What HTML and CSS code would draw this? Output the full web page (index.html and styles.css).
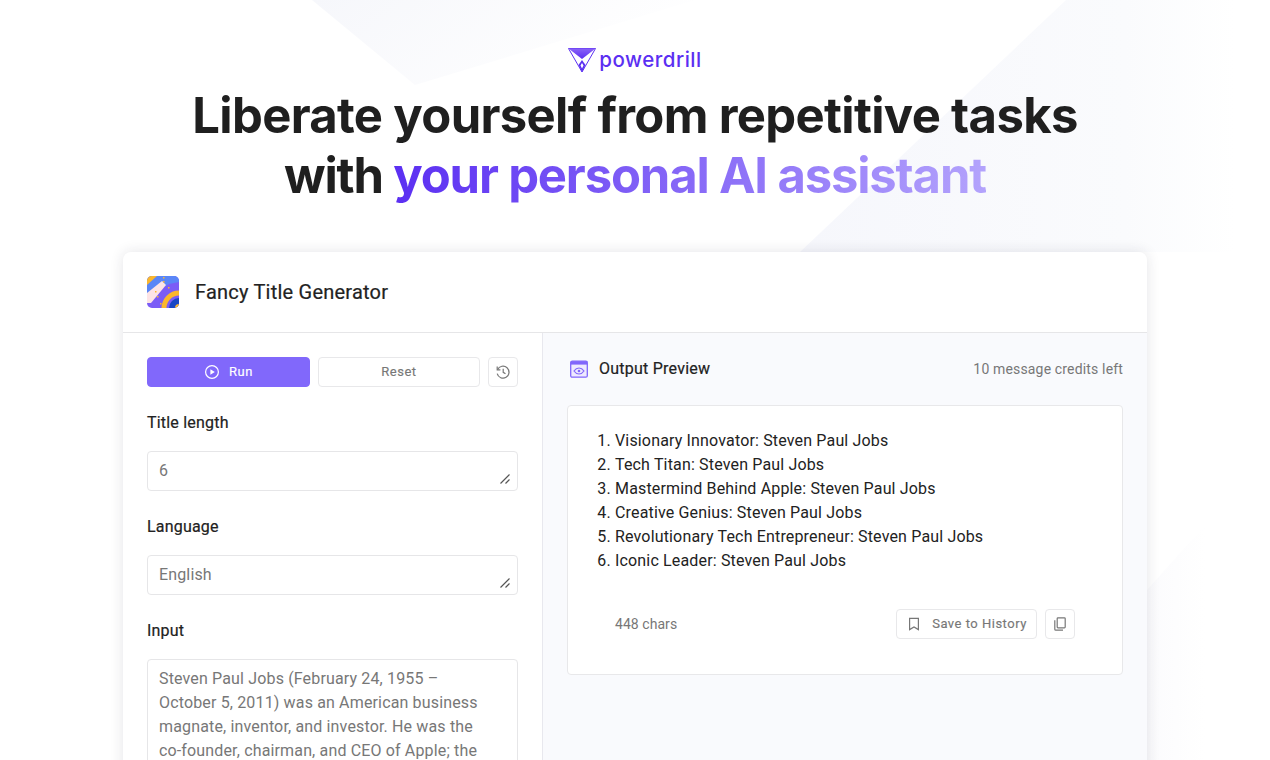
FILE: index.html
```html
<!DOCTYPE html>
<html lang="en">
<head>
<meta charset="utf-8">
<title>Powerdrill</title>
<link rel="stylesheet" href="styles.css">
</head>
<body>
<svg class="backdrop" width="1270" height="760" viewBox="0 0 1270 760" aria-hidden="true">
  <defs>
    <linearGradient id="bgA" x1="0" y1="0" x2="1" y2="0.3"><stop offset="0" stop-color="#f6f7fb"/><stop offset="1" stop-color="#fff"/></linearGradient>
    <linearGradient id="bgB" x1="0" y1="0.5" x2="1" y2="0.5"><stop offset="0" stop-color="#f6f7fc"/><stop offset="0.75" stop-color="#fafbfd"/><stop offset="1" stop-color="#fff"/></linearGradient>
    <linearGradient id="bgC" x1="0" y1="0" x2="1" y2="0"><stop offset="0" stop-color="#fbfbfd"/><stop offset="1" stop-color="#fff"/></linearGradient>
  </defs>
  <polygon points="312,0 695,0 415,85" fill="url(#bgA)"/>
  <polygon points="1066,0 1235,0 1235,252 800,252" fill="url(#bgB)"/>
  <polygon points="1147,590 1205,525 1205,760 1147,760" fill="url(#bgC)"/>
</svg>
<main class="page">
  <header class="hero">
    <div class="brand">
      <svg class="brand-mark" width="28" height="25" viewBox="0 0 28 25" aria-hidden="true">
        <defs><linearGradient id="markTop" x1="0" y1="0" x2="0" y2="1"><stop offset="0" stop-color="#8a63f7"/><stop offset="1" stop-color="#5b2ff2"/></linearGradient></defs>
        <polygon points="0.500,0.500 27.500,0.500 14,24" fill="none" stroke="#5b2ff2" stroke-width="1"/>
        <polygon points="0.500,0.500 27.500,0.500 14,11" fill="url(#markTop)"/>
        <polygon points="14,12 17.500,17 14,24 10.500,17" fill="#5b2ff2"/>
        <polygon points="14,15 15.500,17.500 14,20.500 12.500,17.500" fill="#fff"/>
      </svg>
      <span class="brand-name">powerdrill</span>
    </div>
    <h1 class="headline"><span class="line-one">Liberate yourself from repetitive tasks</span><br><span class="line-two">with <span class="accent">your personal AI assistant</span></span></h1>
  </header>

  <section class="card">
    <div class="card-head">
      <svg class="app-icon" width="32" height="32" viewBox="0 0 32 32" aria-hidden="true">
        <defs><clipPath id="appClip"><rect width="32" height="32" rx="5"/></clipPath></defs>
        <g clip-path="url(#appClip)">
          <rect width="32" height="32" fill="#7b5cf6"/>
          <polygon points="0,0 32,0 32,6 22,8 0,22" fill="#5a86f7"/>
          <polygon points="0,0 10,0 0,9" fill="#fbb72c"/>
          <polygon points="0,17 15,5 19,9 4,27 0,27" fill="#fde4e6"/>
          <circle cx="32" cy="32" r="15" fill="none" stroke="#fbb72c" stroke-width="5"/>
          <circle cx="32" cy="32" r="10" fill="#1746c4"/>
          <circle cx="32" cy="32" r="4" fill="#fbb72c"/>
          <rect x="16" y="1" width="1.500" height="1.500" fill="#fbb72c"/><rect x="16" y="5" width="1.500" height="1.500" fill="#fbb72c"/>
          <rect x="13" y="27" width="1.500" height="1.500" fill="#fbb72c"/><rect x="10" y="20" width="1.500" height="1.500" fill="#fbb72c"/>
          <rect x="21" y="11" width="1.500" height="1.500" fill="#fbb72c"/><rect x="8" y="15" width="1.500" height="1.500" fill="#fbb72c"/>
        </g>
      </svg>
      <h2 class="app-title">Fancy Title Generator</h2>
    </div>
    <div class="card-body">
      <div class="form-pane">
        <div class="actions">
          <button class="btn btn-run" type="button">
            <svg width="16" height="16" viewBox="0 0 16 16" aria-hidden="true"><circle cx="8" cy="8" r="6.400" fill="none" stroke="#fff" stroke-width="1.200"/><polygon points="6.400,5.300 10.800,8 6.400,10.700" fill="#fff"/></svg>
            <span class="btn-text">Run</span>
          </button>
          <button class="btn btn-reset" type="button"><span class="btn-text">Reset</span></button>
          <button class="btn btn-icon" type="button" aria-label="History">
            <svg width="16" height="16" viewBox="0 0 16 16" fill="none" stroke="#777" stroke-width="1.200" aria-hidden="true"><path d="M2.600 5.600A6 6 0 1 1 2.200 9.600"/><path d="M2.200 2.600v3.200h3.200"/><path d="M8.200 4.800v3.500l2.300 1.500"/></svg>
          </button>
        </div>
        <label class="field-label">Title length</label>
        <div class="input">6<svg class="grip" width="10" height="10" viewBox="0 0 10 10" aria-hidden="true"><path d="M0.500 9.500 9.500 0.500M5.500 9.500 9.500 5.500" stroke="#555" stroke-width="1.200" fill="none"/></svg></div>
        <label class="field-label">Language</label>
        <div class="input">English<svg class="grip" width="10" height="10" viewBox="0 0 10 10" aria-hidden="true"><path d="M0.500 9.500 9.500 0.500M5.500 9.500 9.500 5.500" stroke="#555" stroke-width="1.200" fill="none"/></svg></div>
        <label class="field-label">Input</label>
        <div class="input input-long">Steven Paul Jobs (February 24, 1955 –<br>October 5, 2011) was an American business<br>magnate, inventor, and investor. He was the<br>co-founder, chairman, and CEO of Apple; the</div>
      </div>
      <div class="output-pane">
        <div class="output-head">
          <div class="output-title">
            <svg width="20" height="20" viewBox="0 0 20 20" aria-hidden="true"><rect x="1.700" y="2.200" width="16.600" height="16" rx="1.500" fill="#efeafe" stroke="#8166fb" stroke-width="1.300"/><rect x="1.700" y="2.200" width="16.600" height="3.400" fill="#8166fb"/><path d="M5 12c1.400-2 3-3 5-3s3.600 1 5 3c-1.400 2-3 3-5 3s-3.600-1-5-3z" fill="none" stroke="#8166fb" stroke-width="1.200"/><circle cx="10" cy="12" r="1.300" fill="#8166fb"/></svg>
            <h3 class="output-heading">Output Preview</h3>
          </div>
          <span class="credits">10 message credits left</span>
        </div>
        <div class="result">
          <ol class="titles">
            <li>Visionary Innovator: Steven Paul Jobs</li>
            <li>Tech Titan: Steven Paul Jobs</li>
            <li>Mastermind Behind Apple: Steven Paul Jobs</li>
            <li>Creative Genius: Steven Paul Jobs</li>
            <li>Revolutionary Tech Entrepreneur: Steven Paul Jobs</li>
            <li>Iconic Leader: Steven Paul Jobs</li>
          </ol>
          <div class="result-foot">
            <span class="chars">448 chars</span>
            <div class="foot-actions">
              <button class="btn btn-save" type="button">
                <svg width="16" height="16" viewBox="0 0 16 16" fill="none" stroke="#777" stroke-width="1.200" aria-hidden="true"><path d="M3.600 2.400h8.800v11.200L8 11l-4.400 2.600z"/></svg>
                <span class="btn-text">Save to History</span>
              </button>
              <button class="btn btn-icon" type="button" aria-label="Copy">
                <svg width="16" height="16" viewBox="0 0 16 16" fill="none" stroke="#777" stroke-width="1.200" aria-hidden="true"><rect x="5.200" y="1.800" width="8" height="10" rx="0.800"/><path d="M5.200 14.200H3.800a1 1 0 0 1-1-1V4.200M5 14.200h6"/></svg>
              </button>
            </div>
          </div>
        </div>
      </div>
    </div>
  </section>
</main>
</body>
</html>
```
FILE: styles.css
```css
* { box-sizing: border-box; }
html, body { height: 100%; }
body {
  margin: 0;
  height: 760px;
  overflow: hidden;
  position: relative;
  background: #fff;
  font-family: Roboto, "Liberation Sans", sans-serif;
  color: #1f1f1f;
}
.backdrop { position: absolute; left: 0; top: 0; }
.page { position: relative; display: flex; flex-direction: column; align-items: center; }
.hero { display: flex; flex-direction: column; align-items: center; padding-top: 46px; }
.brand { display: flex; align-items: center; gap: 3px; height: 27px; }
.brand-mark { margin-top: 2px; }
.brand-name {
  font-family: Inter, sans-serif;
  font-size: 20.500px;
  line-height: 26px;
  font-weight: 500;
  color: #5b2ff2;
  letter-spacing: 0.500px;
}
.headline {
  margin: 13px 0 0;
  font-family: Inter, sans-serif;
  font-size: 49px;
  line-height: 60px;
  font-weight: 700;
  text-align: center;
  color: #1f1f1f;
}
.line-one { letter-spacing: -0.670px; }
.line-two { letter-spacing: -1.170px; }
.accent {
  background: linear-gradient(90deg, #5b2ff2 0%, #b3a3fc 100%);
  -webkit-background-clip: text;
  background-clip: text;
  color: transparent;
}
.card {
  margin-top: 46px;
  width: 1024px;
  background: #fff;
  border-radius: 8px 8px 0 0;
  box-shadow: 0 0 14px rgba(30, 30, 60, 0.12);
}
.card-head {
  display: flex;
  align-items: center;
  gap: 16px;
  height: 81px;
  padding: 0 24px;
  border-bottom: 1px solid #e6e6e8;
}
.app-icon { display: block; }
.app-title { margin: 0; font-size: 20px; font-weight: 400; line-height: 28px; letter-spacing: 0.220px; color: #222; -webkit-text-stroke: 0.200px #222; }
.card-body { display: flex; height: 500px; }
.form-pane { width: 420px; padding: 24px 24px 0; border-right: 1px solid #e8e8ee; }
.actions { display: flex; gap: 8px; height: 30px; }
.btn {
  display: flex;
  align-items: center;
  justify-content: center;
  font-family: Roboto, sans-serif;
  font-size: 13px;
  font-weight: 400;
  letter-spacing: 0.500px;
  border-radius: 4px;
  border: 1px solid #e8e8ea;
  background: #fff;
  color: #777;
  padding: 0;
  -webkit-text-stroke: 0.150px currentColor;
}
.btn-text { position: relative; top: -1px; }
.btn-run { width: 163px; gap: 9px; background: #8168fb; border-color: #8168fb; color: #fff; }
.btn-reset { width: 162px; }
.btn-icon { width: 30px; height: 30px; }
.field-label { display: block; margin-top: 24px; font-size: 16px; line-height: 24px; font-weight: 400; letter-spacing: 0.200px; color: #222; -webkit-text-stroke: 0.200px #222; }
.input {
  position: relative;
  margin-top: 16px;
  height: 40px;
  padding: 7px 11px;
  border: 1px solid #e6e6e8;
  border-radius: 4px;
  background: #fff;
  font-size: 16px;
  line-height: 24px;
  letter-spacing: 0.150px;
  color: #777;
}
.input-long { height: 200px; }
.grip { position: absolute; right: 7px; bottom: 6px; }
.output-pane { flex: 1; min-width: 0; padding: 24px 24px 0; background: #f9fafd; }
.output-head { display: flex; align-items: center; justify-content: space-between; height: 24px; }
.output-title { display: flex; align-items: center; gap: 10px; margin-left: 2px; }
.output-heading { margin: 0; font-size: 16px; font-weight: 400; line-height: 24px; letter-spacing: 0.240px; color: #222; -webkit-text-stroke: 0.200px #222; }
.credits { font-size: 14px; color: #777; letter-spacing: 0.160px; }
.result {
  margin-top: 24px;
  height: 270px;
  padding: 23px 47px 0 23px;
  background: #fff;
  border: 1px solid #e8e8ea;
  border-radius: 4px;
}
.titles { margin: 0; padding: 0 0 0 24px; font-size: 16px; line-height: 24px; letter-spacing: 0.160px; color: #222; }
.result-foot { display: flex; align-items: center; justify-content: space-between; margin-top: 36px; padding-left: 24px; }
.chars { font-size: 14px; letter-spacing: 0.050px; color: #777; }
.foot-actions { display: flex; gap: 8px; }
.btn-save { width: 141px; height: 30px; gap: 10px; }
```
